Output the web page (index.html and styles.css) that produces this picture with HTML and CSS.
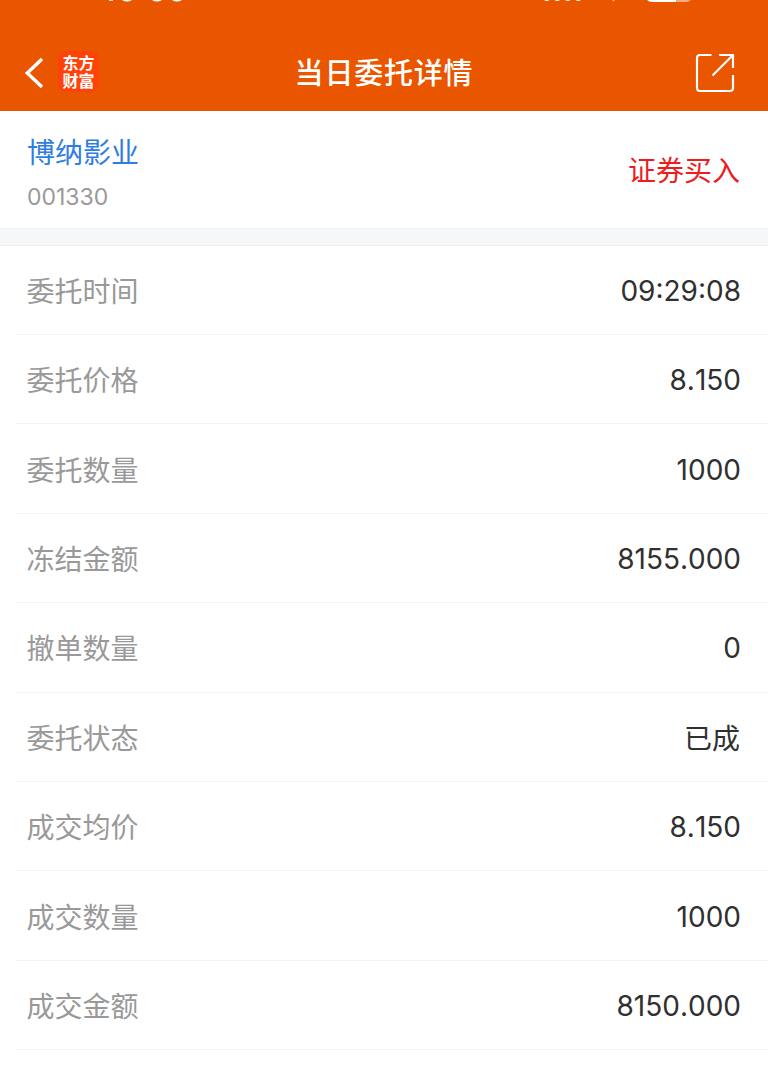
FILE: index.html
```html
<!DOCTYPE html>
<html lang="zh-CN">
<head>
<meta charset="utf-8">
<title>当日委托详情</title>
<link rel="stylesheet" href="styles.css">
</head>
<body>
<header class="header">
  <div class="status">
    <svg width="76" height="3" viewBox="0 0 76 3">
      <path d="M3 0h4v.8h-4zM16 0h10q-5 3.200-10 0zM46 0h10q-5 3.200-10 0zM66 0h10q-5 3.200-10 0z" fill="#fff"/>
    </svg>
    <svg width="150" height="3" viewBox="0 0 150 3">
      <g fill="#fff">
        <path d="M2 0h5.500q-2.700 2-5.500 0zM12.500 0h5.500q-2.700 2-5.500 0zM23 0h5.500q-2.700 2-5.500 0zM33.500 0h5.500q-2.700 2-5.500 0z"/>
        <path d="M70 0h3l-1.500 1.500z" opacity=".6"/>
        <path d="M105 0h29v2h-24q-3 0-5-2z"/>
        <path d="M134 0h15q-2 2-5 2h-10z" opacity=".5"/>
      </g>
    </svg>
  </div>
  <nav class="nav">
    <div class="nav-side">
      <svg class="back" width="20" height="32" viewBox="0 0 20 32"><path d="M18 2L3.300 16 18 30" fill="none" stroke="#fff" stroke-width="3.400"/></svg>
      <div class="logo"><span>东方</span><span>财富</span></div>
    </div>
    <h1 class="title">当日委托详情</h1>
    <div class="nav-side nav-end">
      <svg width="40" height="40" viewBox="0 0 40 40"><path d="M16.500 2H5Q2 2 2 5V35Q2 38 5 38H35Q38 38 38 35V22M24 2H38V15M37.500 2.500L17.500 22.500" fill="none" stroke="#fff" stroke-width="2.200"/></svg>
    </div>
  </nav>
</header>
<section class="stock">
  <div>
    <div class="name">博纳影业</div>
    <div class="code">001330</div>
  </div>
  <div class="side">证券买入</div>
</section>
<div class="divider"></div>
<main class="list">
  <div class="row"><span class="label">委托时间</span><span class="value">09:29:08</span></div>
  <div class="row"><span class="label">委托价格</span><span class="value">8.150</span></div>
  <div class="row"><span class="label">委托数量</span><span class="value">1000</span></div>
  <div class="row"><span class="label">冻结金额</span><span class="value">8155.000</span></div>
  <div class="row"><span class="label">撤单数量</span><span class="value">0</span></div>
  <div class="row"><span class="label">委托状态</span><span class="value text">已成</span></div>
  <div class="row"><span class="label">成交均价</span><span class="value">8.150</span></div>
  <div class="row"><span class="label">成交数量</span><span class="value">1000</span></div>
  <div class="row"><span class="label">成交金额</span><span class="value">8150.000</span></div>
</main>
</body>
</html>
```
FILE: styles.css
```css
* { box-sizing: border-box; }
body {
  margin: 0;
  height: 1074px;
  overflow: hidden;
  background: #fff;
  font-family: Inter, "Noto Sans CJK SC", sans-serif;
}
.header { height: 111.400px; background: #ea5500; color: #fff; }
.status {
  height: 34px;
  padding: 0 76px 0 106px;
  display: flex;
  justify-content: space-between;
  align-items: flex-start;
}
.status svg { display: block; }
.nav { height: 77px; padding: 0 33px; display: flex; align-items: center; }
.nav-side { flex: 1; display: flex; align-items: center; }
.nav-end { justify-content: flex-end; }
.back { margin: 0 0 0 -9px; }
.logo {
  width: 41px;
  height: 41px;
  margin: -3px 0 0 14px;
  border-radius: 8px;
  background: #ff4208;
  display: flex;
  flex-direction: column;
  align-items: center;
  justify-content: center;
  padding-top: 1px;
  font-size: 16px;
  font-weight: 700;
  line-height: 18px;
}
.title { margin: 0; padding-top: 2px; font-size: 29px; font-weight: 500; letter-spacing: 0.800px; line-height: 40px; }
.stock {
  height: 116.600px;
  padding: 3px 28px 0 27px;
  display: flex;
  justify-content: space-between;
  align-items: center;
}
.name { margin-top: 3px; color: #2f7de1; font-size: 28px; line-height: 40px; }
.code { margin-top: 8px; color: #999; font-size: 23px; line-height: 32px; }
.side { color: #ee1c1c; font-size: 28px; line-height: 40px; }
.divider { height: 17.600px; background: #f6f7f9; border-top: 1px solid #eff0f1; border-bottom: 1px solid #eff0f1; }
.list { padding-left: 16px; }
.row {
  height: 89.400px;
  padding: 2px 27px 0 10.500px;
  display: flex;
  align-items: center;
  justify-content: space-between;
  border-bottom: 1px solid #f4f4f4;
  font-size: 28px;
  line-height: 40px;
}
.label { padding-top: 2px; color: #999; }
.value { color: #303030; font-kerning: none; }
.text { padding: 2px 1px 0 0; }
```
